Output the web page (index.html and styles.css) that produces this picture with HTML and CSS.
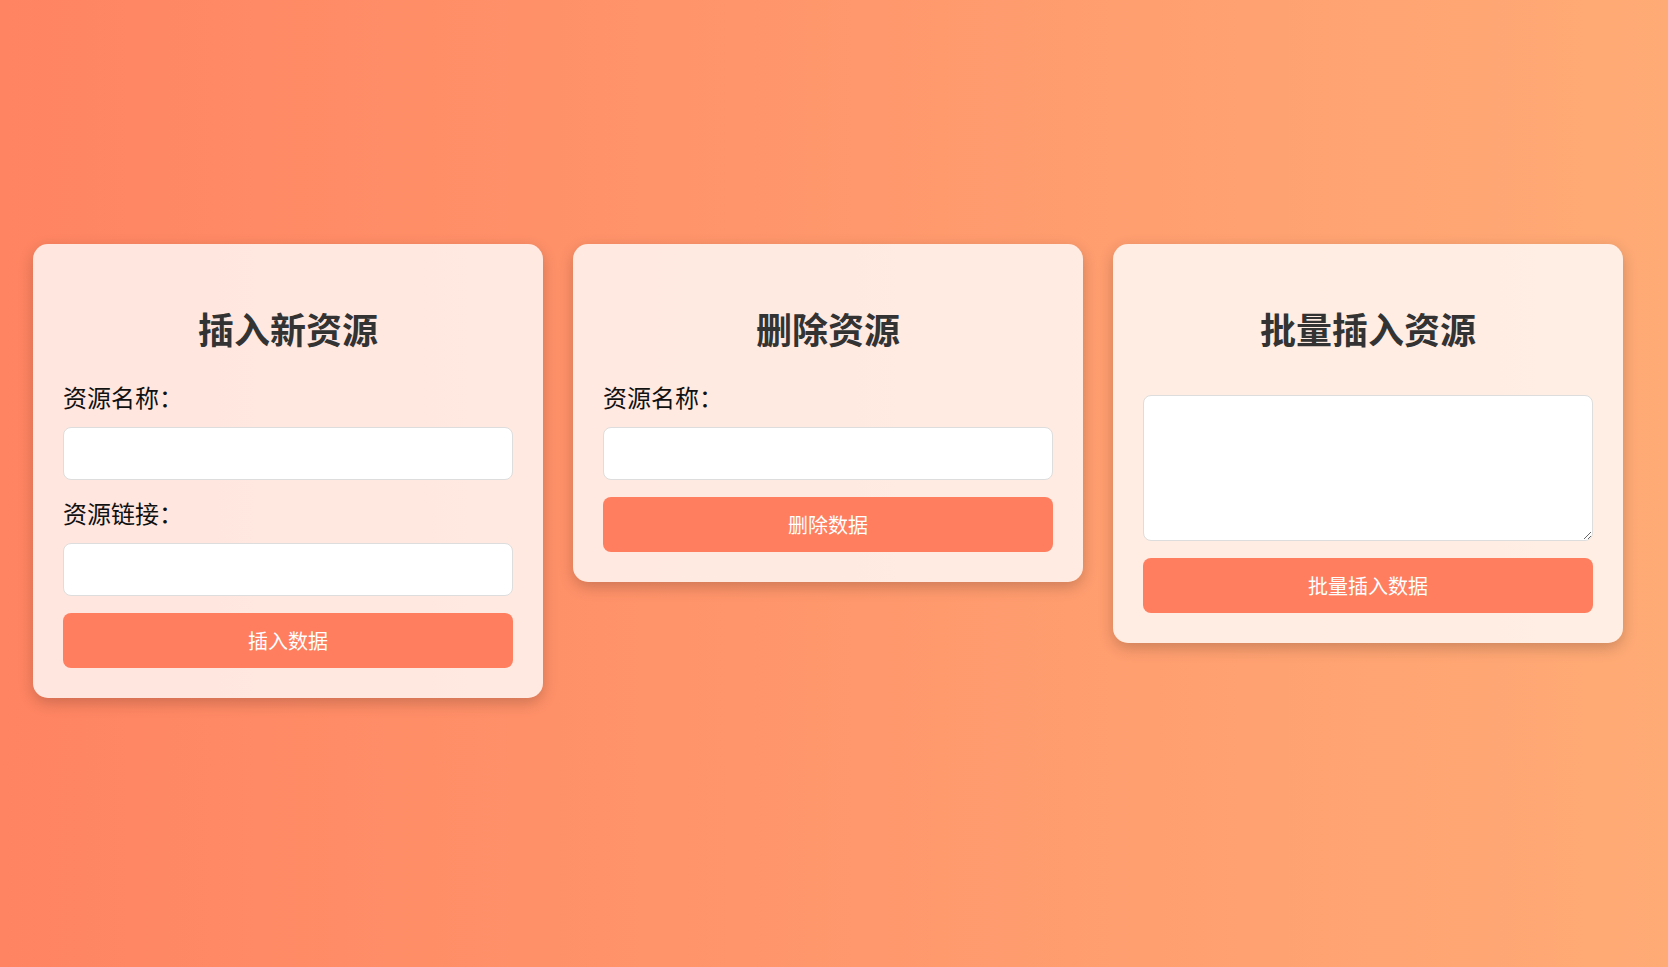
FILE: index.html
```html
<!DOCTYPE html>
<html lang="zh-CN">
<head>
<meta charset="utf-8">
<title>资源管理</title>
<link rel="stylesheet" href="styles.css">
</head>
<body>
<div class="container">
  <div class="card">
    <h2 class="title">插入新资源</h2>
    <label class="label">资源名称：</label>
    <input class="field" type="text">
    <label class="label">资源链接：</label>
    <input class="field" type="text">
    <button class="btn">插入数据</button>
  </div>
  <div class="card">
    <h2 class="title">删除资源</h2>
    <label class="label">资源名称：</label>
    <input class="field" type="text">
    <button class="btn">删除数据</button>
  </div>
  <div class="card">
    <h2 class="title">批量插入资源</h2>
    <textarea class="area"></textarea>
    <button class="btn">批量插入数据</button>
  </div>
</div>
</body>
</html>
```

FILE: styles.css
```css
html, body {
  margin: 0;
  padding: 0;
}
body {
  min-height: 100vh;
  background: linear-gradient(to right, #ff8462, #ffab76);
  font-family: "Noto Sans CJK SC", "Microsoft YaHei", sans-serif;
}
.container {
  display: flex;
  align-items: flex-start;
  gap: 30px;
  padding: 244px 0 0 33px;
  box-sizing: border-box;
  min-height: 100vh;
}
.card {
  width: 510px;
  box-sizing: border-box;
  padding: 30px;
  background: rgba(255, 255, 255, 0.8);
  border-radius: 15px;
  box-shadow: 0 5px 15px rgba(0, 0, 0, 0.2);
  display: flex;
  flex-direction: column;
}
.title {
  margin: 30px 0 29px;
  font-size: 36px;
  line-height: 48px;
  font-weight: bold;
  color: #333;
  text-align: center;
}
.label {
  display: block;
  font-size: 24px;
  line-height: 31px;
  color: #111;
  margin-bottom: 15px;
}
.field {
  display: block;
  width: 100%;
  height: 53px;
  box-sizing: border-box;
  border: 1px solid #ddd;
  border-radius: 8px;
  background: #fff;
  margin: 0 0 17px;
  padding: 0 12px;
  font-size: 18px;
  font-family: inherit;
}
.area {
  display: block;
  width: 100%;
  height: 146px;
  box-sizing: border-box;
  border: 1px solid #ddd;
  border-radius: 8px;
  background: #fff;
  margin: 14px 0 17px;
  padding: 12px;
  font-size: 18px;
  font-family: inherit;
  resize: vertical;
}
.btn {
  display: block;
  width: 100%;
  height: 55px;
  border: none;
  border-radius: 8px;
  background: #ff7e5f;
  color: #fff;
  font-size: 20px;
  font-family: inherit;
  cursor: pointer;
  padding: 0;
}
```
